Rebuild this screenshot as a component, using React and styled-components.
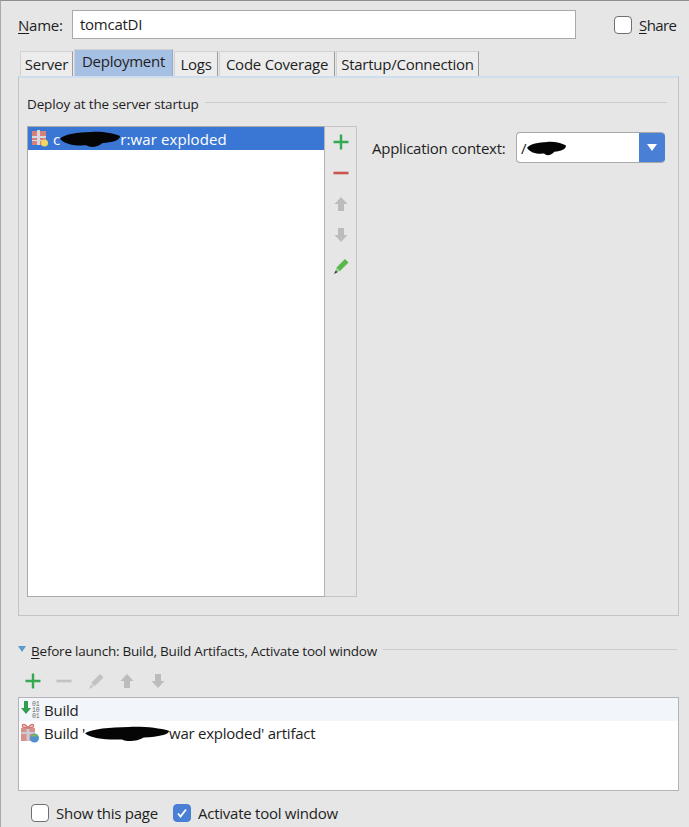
import React from "react";
import styled, { createGlobalStyle } from "styled-components";

const Global = createGlobalStyle`
  html, body {
    margin: 0;
    padding: 0;
    background: #e6e6e6;
  }
`;

const Dialog = styled.div`
  box-sizing: border-box;
  width: 689px;
  height: 827px;
  overflow: hidden;
  padding: 9px 10px 0 17px;
  border-top: 1px solid #8f8f8f;
  border-left: 1px solid #a8a8a8;
  background: #e6e6e6;
  color: #1e1e1e;
  font-family: "Open Sans", "Noto Sans", sans-serif;
  font-size: 15px;
  letter-spacing: -0.25px;
`;

const NameRow = styled.div`
  display: flex;
  align-items: center;
  height: 29px;
`;

const NameLabel = styled.label`
  width: 54px;
`;

const NameInput = styled.div`
  box-sizing: border-box;
  width: 504px;
  height: 29px;
  padding: 0 7px;
  line-height: 27px;
  background: #fff;
  border: 1px solid #a9a9a9;
`;

const Check = styled.span`
  box-sizing: border-box;
  display: inline-flex;
  align-items: center;
  justify-content: center;
  flex: none;
  width: 18px;
  height: 18px;
  border-radius: 4px;
  background: ${(p) => (p.$on ? "#4a7fd6" : "#fff")};
  border: 1px solid ${(p) => (p.$on ? "#4a7fd6" : "#6f6f6f")};
`;

const ShareBox = styled.div`
  display: flex;
  align-items: center;
  gap: 7px;
  margin-left: 38px;
  letter-spacing: -0.6px;
`;

const TabBar = styled.div`
  display: flex;
  align-items: flex-end;
  gap: 1px;
  height: 27px;
  margin: 10px 0 0 2px;
`;

const Tab = styled.div`
  box-sizing: border-box;
  width: ${(p) => p.$w}px;
  height: ${(p) => (p.$active ? 27 : 25)}px;
  padding-top: ${(p) => (p.$active ? 1 : 2)}px;
  text-align: center;
  white-space: nowrap;
  background: ${(p) => (p.$active ? "#a6c0e4" : "#ececec")};
  border: 1px solid #d2d2d2;
  border-bottom: none;
  border-right-color: ${(p) => (p.$active ? "#8fa9cf" : "#9c9c9c")};
`;

const Panel = styled.div`
  box-sizing: border-box;
  width: 661px;
  height: 540px;
  padding: 16px 11px 0 8px;
  border: 1px solid #c4c4c4;
  border-top: 2px solid #cfdeef;
`;

const SectionTitle = styled.div`
  display: flex;
  align-items: center;
  gap: 6px;
  height: 20px;
  white-space: nowrap;
  font-size: 13.5px;
  letter-spacing: -0.15px;

  &::after {
    content: "";
    flex: 1;
    height: 1px;
    margin-top: -3px;
    background: #cbcbcb;
  }
`;

const DeployBody = styled.div`
  display: flex;
  margin-top: 12px;
`;

const DeployList = styled.div`
  box-sizing: border-box;
  width: 298px;
  height: 471px;
  background: #fff;
  border: 1px solid #a9a9a9;
  border-right: 1px solid #b5b5b5;
`;

const SelectedRow = styled.div`
  display: flex;
  align-items: center;
  height: 23px;
  padding-left: 3px;
  background: #3a76d4;
  color: #fff;
  letter-spacing: 0.1px;
`;

const RowText = styled.span`
  display: inline-flex;
  align-items: center;
  white-space: nowrap;
  margin-left: ${(p) => p.$ml}px;
`;

const Blob = styled.svg`
  flex: none;
  margin: 2px ${(p) => p.$mr || 0}px 0 ${(p) => p.$ml || 0}px;
`;

const Redaction = ({ w, h, ml, mr }) => (
  <Blob $ml={ml} $mr={mr} width={w} height={h} viewBox="0 0 100 100" preserveAspectRatio="none">
    <path
      d="M0 45C8 18 30 8 52 6C70 2 88 12 100 30C100 55 88 68 70 72C62 98 50 100 44 84C26 88 8 80 0 45z"
      fill="#050505"
    />
  </Blob>
);

const SideTools = styled.div`
  box-sizing: border-box;
  display: flex;
  flex-direction: column;
  align-items: center;
  gap: 11px;
  width: 32px;
  height: 471px;
  padding-top: 5px;
  border: 1px solid #c4c4c4;
  border-left: none;
`;

const ContextPane = styled.div`
  display: flex;
  align-items: center;
  align-self: flex-start;
  height: 31px;
  margin: 6px 0 0 15px;
`;

const ContextLabel = styled.span`
  width: 144px;
  white-space: nowrap;
`;

const Combo = styled.div`
  box-sizing: border-box;
  display: flex;
  align-items: center;
  width: 149px;
  height: 31px;
  background: #fff;
  border: 1px solid #a9a9a9;
  border-right: none;
  border-radius: 4px;
  overflow: hidden;
`;

const ComboValue = styled.div`
  flex: 1;
  display: flex;
  align-items: center;
  padding-left: 4px;
`;

const ComboArrow = styled.div`
  display: flex;
  align-items: center;
  justify-content: center;
  width: 26px;
  height: 31px;
  background: #4a7fd6;
`;

const BeforeHeader = styled.div`
  display: flex;
  align-items: center;
  gap: 5px;
  height: 20px;
  margin-top: 25px;
  white-space: nowrap;
  font-size: 13.5px;
  letter-spacing: -0.22px;

  &::after {
    content: "";
    flex: 1;
    height: 1px;
    background: #cbcbcb;
    margin: -3px 2px 0 1px;
  }
`;

const Triangle = styled.span`
  width: 0;
  height: 0;
  margin-top: -5px;
  border-left: 4px solid transparent;
  border-right: 4px solid transparent;
  border-top: 6px solid #5b9bc9;
`;

const TopTools = styled.div`
  display: flex;
  align-items: center;
  gap: 11.25px;
  height: 20px;
  margin: 10px 0 0 5px;
`;

const TaskList = styled.div`
  box-sizing: border-box;
  width: 661px;
  height: 94px;
  margin-top: 6px;
  background: #fff;
  border: 1px solid #b4b4b8;
`;

const TaskRow = styled.div`
  display: flex;
  align-items: center;
  height: ${(p) => (p.$hover ? 23 : 24)}px;
  padding-left: 1px;
  background: ${(p) => (p.$hover ? "#f2f5f9" : "#fff")};
`;

const Footer = styled.div`
  display: flex;
  align-items: center;
  height: 18px;
  margin: 13px 0 0 13px;
`;

const FooterItem = styled.div`
  display: flex;
  align-items: center;
  gap: 7px;
  width: 142px;
  white-space: nowrap;
`;

const Underlined = styled.span`
  text-decoration: underline;
  text-underline-offset: 2px;
  text-decoration-thickness: 1px;
`;

const Plus = () => (
  <svg width="20" height="20" viewBox="0 0 20 20">
    <path d="M10 2.500v15M2.500 10h15" stroke="#35a852" strokeWidth="2.400" />
  </svg>
);

const Minus = ({ color }) => (
  <svg width="20" height="20" viewBox="0 0 20 20">
    <path d="M2.500 10h15" stroke={color} strokeWidth="2.600" />
  </svg>
);

const UpArrow = () => (
  <svg width="20" height="20" viewBox="0 0 20 20">
    <path d="M10 3l6.500 7H13v7H7v-7H3.500z" fill="#bcbcbc" />
  </svg>
);

const DownArrow = () => (
  <svg width="20" height="20" viewBox="0 0 20 20">
    <path d="M10 17l6.500-7H13V3H7v7H3.500z" fill="#bcbcbc" />
  </svg>
);

const Pencil = ({ color, tip }) => (
  <svg width="20" height="20" viewBox="0 0 20 20">
    <path d="M5.500 11.500L14 3l3.500 3.500L9 15z" fill={color} />
    <path d="M5.500 11.500L9 15l-5 2z" fill={color} opacity="0.55" />
    <path d="M4.800 14.500L3 18l3.500-1.800z" fill={tip} />
  </svg>
);

const ArtifactIcon = () => (
  <svg width="20" height="20" viewBox="0 0 20 20">
    <rect x="1" y="5" width="14" height="13" fill="#d9908a" />
    <rect x="1" y="9" width="14" height="2" fill="#c9ccd2" />
    <rect x="6.500" y="5" width="3" height="13" fill="#c9ccd2" />
    <path d="M8 5C5 0 1 1 3 4zM8 5c3-5 7-4 5-1z" fill="none" stroke="#cf7a74" strokeWidth="1.500" />
    <circle cx="14.500" cy="15" r="4.500" fill="#4f8fd0" />
    <path d="M10.500 13.500a4.500 4.500 0 0 1 8 0z" fill="#7cb654" />
  </svg>
);

const SelectedArtifactIcon = () => (
  <svg width="18" height="20" viewBox="0 0 18 20">
    <rect x="1" y="2" width="14" height="14" fill="#d77f78" />
    <rect x="1" y="7" width="14" height="2" fill="#d5d9e2" />
    <rect x="1" y="11" width="14" height="1" fill="#d5d9e2" />
    <rect x="6" y="1" width="3" height="15" fill="#d5d9e2" />
    <circle cx="13.500" cy="14" r="3.500" fill="#f0d860" />
  </svg>
);

const BuildIcon = () => (
  <svg width="22" height="20" viewBox="0 0 22 20">
    <path d="M6 14L1 8h3V1h4v7h3z" fill="#2f9e50" />
    <text x="12" y="6" fontSize="6.500" fontFamily="Liberation Mono, monospace" fill="#666">01</text>
    <text x="12" y="12" fontSize="6.500" fontFamily="Liberation Mono, monospace" fill="#666">10</text>
    <text x="12" y="18" fontSize="6.500" fontFamily="Liberation Mono, monospace" fill="#666">01</text>
  </svg>
);

const CheckMark = () => (
  <svg width="12" height="12" viewBox="0 0 12 12">
    <path d="M2 6.500l2.500 3L10 2.500" stroke="#fff" strokeWidth="1.800" fill="none" />
  </svg>
);

const ComboTriangle = () => (
  <svg width="12" height="9" viewBox="0 0 12 9">
    <path d="M1 1h10L6 8z" fill="#fff" />
  </svg>
);

const App = () => (
  <Dialog>
    <Global />
    <NameRow>
      <NameLabel>
        <Underlined>N</Underlined>ame:
      </NameLabel>
      <NameInput>tomcatDI</NameInput>
      <ShareBox>
        <Check />
        <span>
          <Underlined>S</Underlined>hare
        </span>
      </ShareBox>
    </NameRow>

    <TabBar>
      <Tab $w={53}>Server</Tab>
      <Tab $w={99} $active>
        Deployment
      </Tab>
      <Tab $w={44}>Logs</Tab>
      <Tab $w={116}>Code Coverage</Tab>
      <Tab $w={143}>Startup/Connection</Tab>
    </TabBar>

    <Panel>
      <SectionTitle>Deploy at the server startup</SectionTitle>
      <DeployBody>
        <DeployList>
          <SelectedRow>
            <SelectedArtifactIcon />
            <RowText $ml={4}>
              c
              <Redaction w={60} h={17} />
              r:war exploded
            </RowText>
          </SelectedRow>
        </DeployList>
        <SideTools>
          <Plus />
          <Minus color="#c9564c" />
          <UpArrow />
          <DownArrow />
          <Pencil color="#58b84a" tip="#333" />
        </SideTools>
        <ContextPane>
          <ContextLabel>Application context:</ContextLabel>
          <Combo>
            <ComboValue>
              /<Redaction w={39} h={15} ml={1} />
            </ComboValue>
            <ComboArrow>
              <ComboTriangle />
            </ComboArrow>
          </Combo>
        </ContextPane>
      </DeployBody>
    </Panel>

    <BeforeHeader>
      <Triangle />
      <span>
        <Underlined>B</Underlined>efore launch: Build, Build Artifacts, Activate tool window
      </span>
    </BeforeHeader>

    <TopTools>
      <Plus />
      <Minus color="#c2c2c2" />
      <Pencil color="#c2c2c2" tip="#c2c2c2" />
      <UpArrow />
      <DownArrow />
    </TopTools>

    <TaskList>
      <TaskRow $hover>
        <BuildIcon />
        <RowText $ml={2}>Build</RowText>
      </TaskRow>
      <TaskRow>
        <ArtifactIcon />
        <RowText $ml={4}>
          Build '
          <Redaction w={84} h={16} />
          war exploded' artifact
        </RowText>
      </TaskRow>
    </TaskList>

    <Footer>
      <FooterItem>
        <Check />
        <span>Show this page</span>
      </FooterItem>
      <FooterItem>
        <Check $on>
          <CheckMark />
        </Check>
        <span>Activate tool window</span>
      </FooterItem>
    </Footer>
  </Dialog>
);

export default App;
